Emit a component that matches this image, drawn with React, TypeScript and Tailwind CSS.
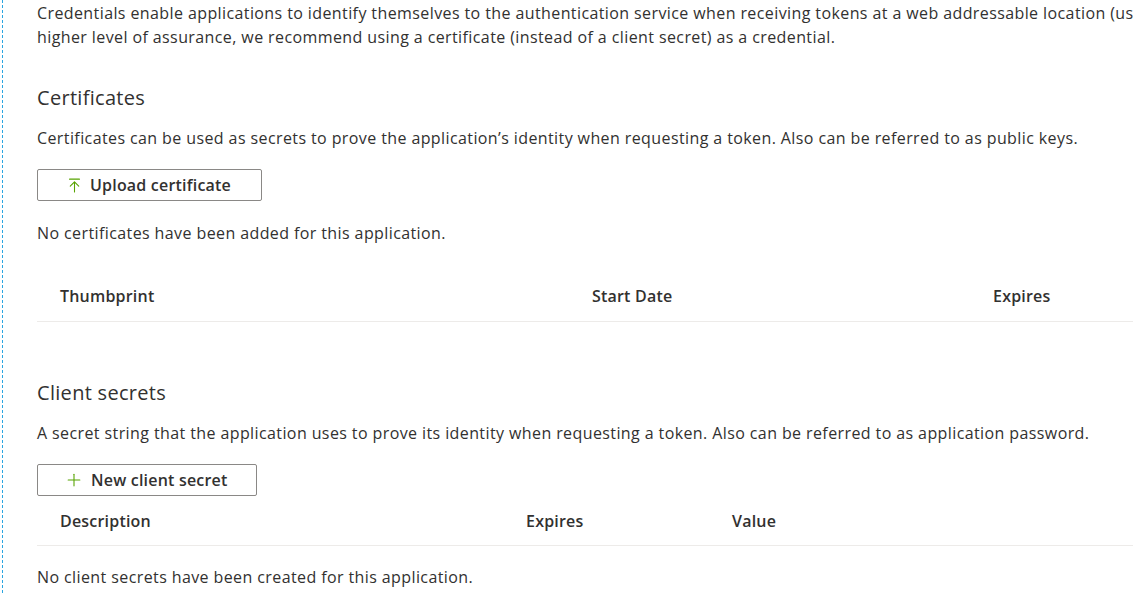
import { ArrowUpToLine, Plus } from 'lucide-react';

function ActionButton({ icon, label, width }: { icon: 'upload' | 'plus'; label: string; width: string }) {
  return (
    <button
      className={`flex h-[32px] ${width} items-center gap-[7px] rounded-[2px] border border-[#8a8886] bg-white pl-[28px] text-[16px] font-semibold tracking-[0.2px] text-[#323130]`}
    >
      {icon === 'upload' ? (
        <ArrowUpToLine className="h-[17px] w-[17px] text-[#57a300]" strokeWidth={1.5} />
      ) : (
        <Plus className="-ml-[2px] h-[20px] w-[20px] text-[#57a300]" strokeWidth={1.3} />
      )}
      <span>{label}</span>
    </button>
  );
}

export default function App() {
  return (
    <div
      className="relative h-[593px] w-[1133px] overflow-hidden bg-white text-[#323130]"
      style={{ fontFamily: '"Open Sans", "Noto Sans", sans-serif' }}
    >
      {/* dashed focus edge on the left */}
      <div className="absolute left-[2px] top-0 h-full border-l border-dashed border-[#2aa5e0]" />

      <div className="w-[1240px] pl-[37px] text-[16px] leading-[22px] tracking-[0.4px]">
        <p className="whitespace-nowrap pt-[1px] leading-[24px]">
          Credentials enable applications to identify themselves to the authentication service when receiving tokens at a web addressable location (using an HTTPS scheme). For a
          <br />
          higher level of assurance, we recommend using a certificate (instead of a client secret) as a credential.
        </p>

        {/* Certificates */}
        <h2 className="mt-[36px] text-[20px] leading-[26px] tracking-[0.3px]">Certificates</h2>
        <p className="mt-[16px] whitespace-nowrap">
          Certificates can be used as secrets to prove the application’s identity when requesting a token. Also can be referred to as public keys.
        </p>
        <div className="mt-[20px]">
          <ActionButton icon="upload" label="Upload certificate" width="w-[225px]" />
        </div>
        <p className="mt-[21px]">No certificates have been added for this application.</p>

        <div className="mt-[41px] grid grid-cols-[532px_401px_1fr] border-b border-[#edebe9] pb-[14px] font-semibold tracking-[0.2px]">
          <div className="pl-[23px]">Thumbprint</div>
          <div className="pl-[23px]">Start Date</div>
          <div className="pl-[23px]">Expires</div>
        </div>

        {/* Client secrets */}
        <h2 className="mt-[58px] text-[20px] leading-[26px] tracking-[0.3px]">Client secrets</h2>
        <p className="mt-[16px] whitespace-nowrap">
          A secret string that the application uses to prove its identity when requesting a token. Also can be referred to as application password.
        </p>
        <div className="mt-[20px]">
          <ActionButton icon="plus" label="New client secret" width="w-[220px]" />
        </div>

        <div className="mt-[14px] grid grid-cols-[466px_206px_1fr] border-b border-[#edebe9] pb-[13px] font-semibold tracking-[0.2px]">
          <div className="pl-[23px]">Description</div>
          <div className="pl-[23px]">Expires</div>
          <div className="pl-[23px]">Value</div>
        </div>
        <p className="mt-[20px]">No client secrets have been created for this application.</p>
      </div>
    </div>
  );
}
